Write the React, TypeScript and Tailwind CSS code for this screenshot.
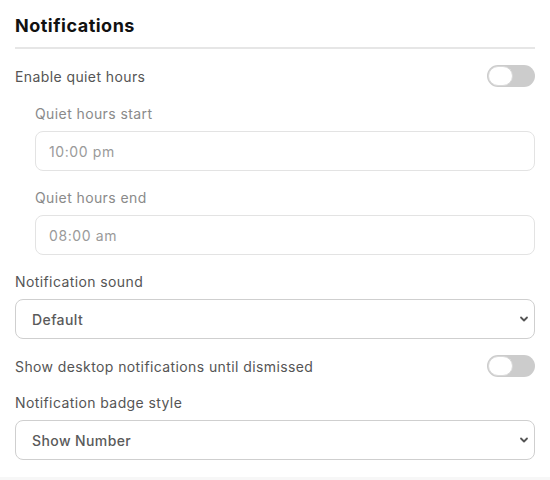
import { useState } from 'react';

function Toggle({ on, onChange }: { on: boolean; onChange: () => void }) {
  return (
    <button
      type="button"
      onClick={onChange}
      className={`relative h-[22px] w-[48px] rounded-full p-[1px] flex items-center ${on ? 'bg-[#4f7cff] justify-end' : 'bg-[#cccccc] justify-start'}`}
    >
      <span className="block h-[20px] w-[25px] rounded-full bg-white border border-[#d9d9d9]" />
    </button>
  );
}

function Chevron() {
  return (
    <svg className="pointer-events-none absolute right-[6px] top-1/2 -translate-y-1/2" width="10" height="10" viewBox="0 0 10 10" fill="none">
      <path d="M2 3.5 L5 6.5 L8 3.5" stroke="#555" strokeWidth="1.8" strokeLinecap="round" strokeLinejoin="round" />
    </svg>
  );
}

function SelectField({ value, options }: { value: string; options: string[] }) {
  const [v, setV] = useState(value);
  return (
    <div className="relative">
      <select
        value={v}
        onChange={(e) => setV(e.target.value)}
        className="block w-full h-[40px] appearance-none rounded-[8px] border border-[#cfcfcf] bg-white pl-4 pr-8 text-[14px] tracking-[0.4px] font-medium text-[#5a5a5a] outline-none"
      >
        {options.map((o) => (
          <option key={o}>{o}</option>
        ))}
      </select>
      <Chevron />
    </div>
  );
}

function TimeField({ value }: { value: string }) {
  return (
    <input
      type="text"
      readOnly
      value={value}
      className="block w-full h-[40px] rounded-[8px] border border-[#e3e3e3] bg-white pl-[13px] text-[14px] tracking-[0.6px] text-[#9a9a9a] outline-none"
    />
  );
}

export default function App() {
  const [quiet, setQuiet] = useState(false);
  const [persist, setPersist] = useState(false);

  return (
    <div className="w-[550px] h-[480px] bg-white flex flex-col tracking-[0.4px]" style={{ fontFamily: 'Inter, "Open Sans", sans-serif' }}>
      <div className="px-[15px] pt-[13px] flex-1">
        <h2 className="text-[18px] leading-[26px] font-bold tracking-[0.5px] text-[#111111]">Notifications</h2>
        <div className="mt-[8px] h-[2px] bg-[#e6e6e6]" />

        <div className="mt-[16px] h-[22px] flex items-center justify-between">
          <span className="text-[14px] text-[#555555]">Enable quiet hours</span>
          <Toggle on={quiet} onChange={() => setQuiet(!quiet)} />
        </div>

        <div className="pl-5">
          <div className="mt-[17px] text-[14px] leading-[20px] text-[#8a8a8a]">Quiet hours start</div>
          <div className="mt-[7px]">
            <TimeField value="10:00 pm" />
          </div>
          <div className="mt-[17px] text-[14px] leading-[20px] text-[#8a8a8a]">Quiet hours end</div>
          <div className="mt-[7px]">
            <TimeField value="08:00 am" />
          </div>
        </div>

        <div className="mt-[17px] text-[14px] leading-[20px] text-[#555555]">Notification sound</div>
        <div className="mt-[7px]">
          <SelectField value="Default" options={['Default', 'Chime', 'Bell', 'None']} />
        </div>

        <div className="mt-[16px] h-[22px] flex items-center justify-between">
          <span className="text-[14px] text-[#555555]">Show desktop notifications until dismissed</span>
          <Toggle on={persist} onChange={() => setPersist(!persist)} />
        </div>

        <div className="mt-[16px] text-[14px] leading-[20px] text-[#555555]">Notification badge style</div>
        <div className="mt-[7px]">
          <SelectField value="Show Number" options={['Show Number', 'Show Dot', 'Hidden']} />
        </div>
      </div>
      <div className="h-[3px] bg-[#f7f7f7]" />
    </div>
  );
}
